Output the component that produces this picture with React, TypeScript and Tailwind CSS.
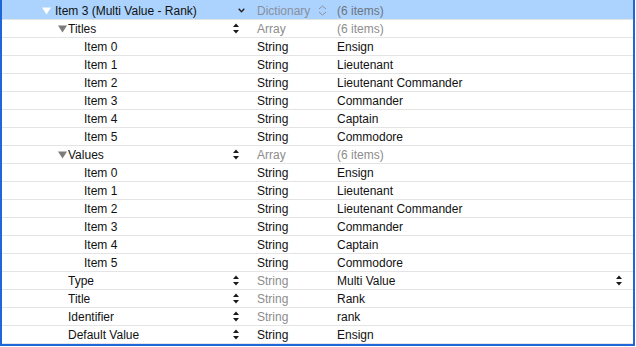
type Row = {
  key: string;
  level: 0 | 1 | 2;
  open?: boolean;
  stepper?: boolean;
  type: string;
  typeDim?: boolean;
  value: string;
  valueDim?: boolean;
  popup?: boolean;
};

const ranks = ["Ensign", "Lieutenant", "Lieutenant Commander", "Commander", "Captain", "Commodore"];

const rows: Row[] = [
  { key: "Titles", level: 1, open: true, stepper: true, type: "Array", typeDim: true, value: "(6 items)", valueDim: true },
  ...ranks.map((r, i) => ({ key: `Item ${i}`, level: 2 as const, type: "String", value: r })),
  { key: "Values", level: 1, open: true, stepper: true, type: "Array", typeDim: true, value: "(6 items)", valueDim: true },
  ...ranks.map((r, i) => ({ key: `Item ${i}`, level: 2 as const, type: "String", value: r })),
  { key: "Type", level: 1, stepper: true, type: "String", typeDim: true, value: "Multi Value", popup: true },
  { key: "Title", level: 1, stepper: true, type: "String", typeDim: true, value: "Rank" },
  { key: "Identifier", level: 1, stepper: true, type: "String", typeDim: true, value: "rank" },
  { key: "Default Value", level: 1, stepper: true, type: "String", value: "Ensign" },
];

function Triangle({ color }: { color: string }) {
  return (
    <svg width="9" height="8" viewBox="0 0 9 8" className="shrink-0">
      <path d="M0 0.5 H9 L4.5 7.5 Z" fill={color} />
    </svg>
  );
}

function Stepper() {
  return (
    <svg width="6" height="11" viewBox="0 0 6 11" className="shrink-0">
      <path d="M0 4 L3 0.5 L6 4 Z" fill="#1a1a1a" />
      <path d="M0 7 L6 7 L3 10.5 Z" fill="#1a1a1a" />
    </svg>
  );
}

function RowView({ row }: { row: Row }) {
  const indent = row.level === 1 ? (row.open ? "pl-[56px]" : "pl-[66px]") : "pl-[82px]";
  return (
    <div className="flex h-[18px] items-center border-b border-[#e4e4e4] text-[#111]">
      <div className={`flex w-[228px] items-center gap-[1px] ${indent}`}>
        {row.open && <Triangle color="#7b7b7b" />}
        <span>{row.key}</span>
      </div>
      <div className="flex w-[25px] pl-[3px]">{row.stepper && <Stepper />}</div>
      <div className={`w-[80px] pl-[2px] ${row.typeDim ? "text-[#8d8d8d]" : ""}`}>{row.type}</div>
      <div className={`flex flex-1 items-center pl-[2px] pr-[11px] ${row.valueDim ? "text-[#8d8d8d]" : ""}`}>
        <span className="flex-1">{row.value}</span>
        {row.popup && <Stepper />}
      </div>
    </div>
  );
}

export default function App() {
  return (
    <div className="h-[347px] w-[636px] bg-white font-['Liberation_Sans',Arial,sans-serif] text-[12px] leading-none">
      <div className="w-[635px] border-x-2 border-b-2 border-[#1f66d8]">
        <div className="flex h-[20px] items-center border-b border-[#e4e4e4] bg-[#abd3fd] pt-[2px] text-[#111]">
          <div className="flex w-[228px] items-center gap-[4px] pl-[40px]">
            <Triangle color="#ffffff" />
            <span>Item 3 (Multi Value - Rank)</span>
          </div>
          <div className="flex w-[25px] pl-[8px]">
            <svg width="7" height="5" viewBox="0 0 7 5">
              <path d="M0.7 0.7 L3.5 3.8 L6.3 0.7" stroke="#222" strokeWidth="1.4" fill="none" />
            </svg>
          </div>
          <div className="flex w-[80px] items-center pl-[2px] text-[#8a8fa0]">
            <span className="flex-1">Dictionary</span>
            <svg width="9" height="11" viewBox="0 0 9 11" className="mr-[8px]">
              <path d="M1 4 L4.5 1 L8 4" stroke="#8a8fa0" strokeWidth="1" fill="none" />
              <path d="M1 7 L4.5 10 L8 7" stroke="#8a8fa0" strokeWidth="1" fill="none" />
            </svg>
          </div>
          <div className="flex-1 pl-[2px] text-[#6f7480]">(6 items)</div>
        </div>
        {rows.map((row, i) => (
          <RowView key={i} row={row} />
        ))}
      </div>
    </div>
  );
}
